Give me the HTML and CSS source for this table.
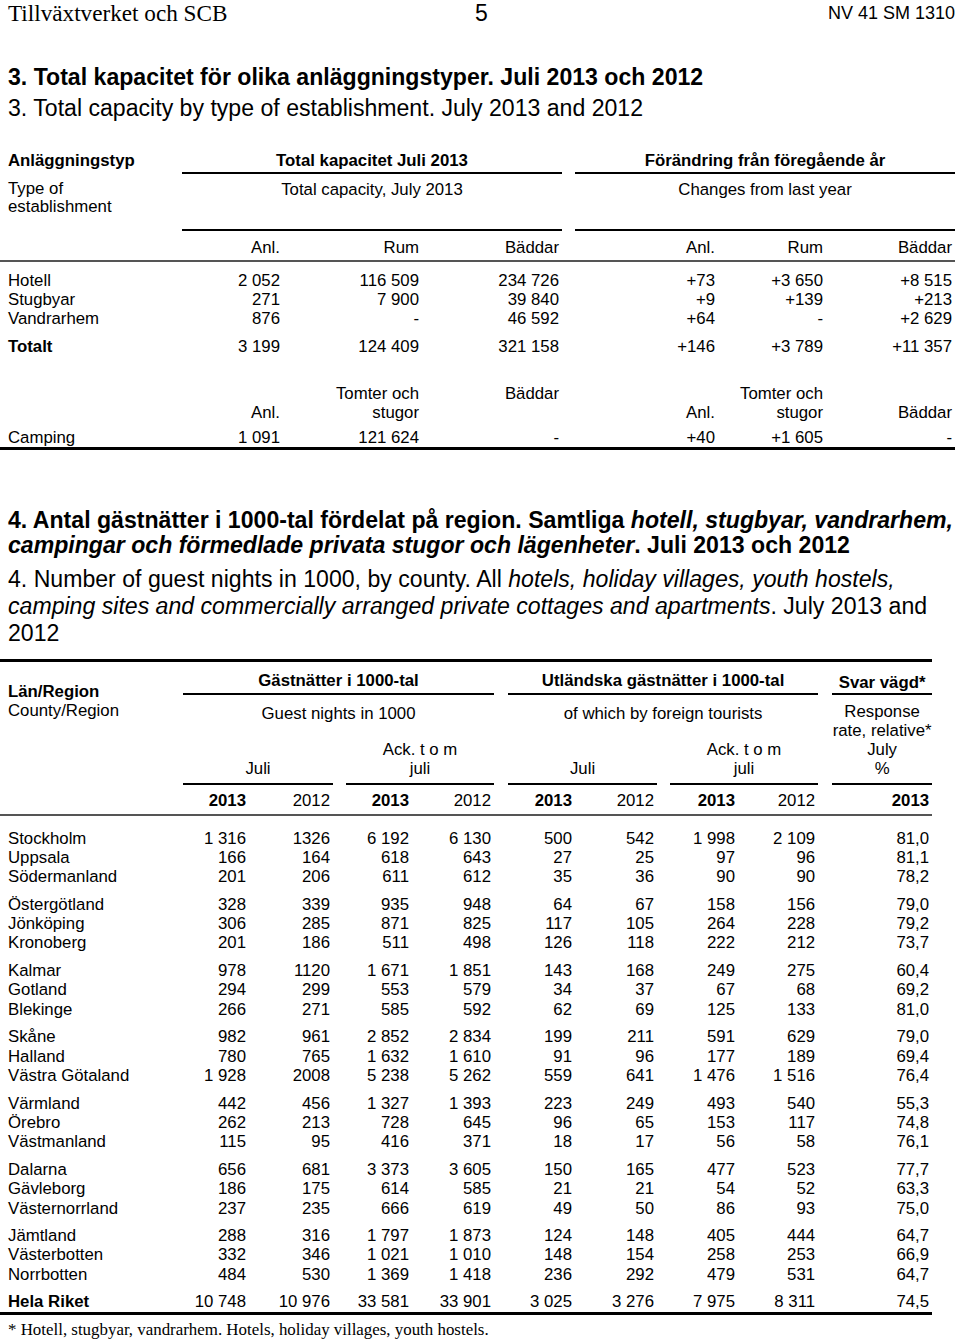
FILE: index.html
```html
<!DOCTYPE html>
<html lang="sv">
<head>
<meta charset="utf-8">
<title>NV 41 SM 1310</title>
<link rel="stylesheet" href="styles.css">
</head>
<body>
<header class="page-head">
  <span class="org">Tillväxtverket och SCB</span>
  <span class="pageno">5</span>
  <span class="docid">NV 41 SM 1310</span>
</header>

<h2 class="t3-sv">3. Total kapacitet för olika anläggningstyper. Juli 2013 och 2012</h2>
<p class="t3-en">3. Total capacity by type of establishment. July 2013 and 2012</p>

<table class="cap">
  <colgroup>
    <col style="width:182px"><col style="width:101px"><col style="width:139px"><col style="width:140px">
    <col style="width:13px"><col style="width:143px"><col style="width:108px"><col style="width:129px">
  </colgroup>
  <tr class="ha">
    <td class="lbl b">Anläggningstyp</td>
    <td class="grp b" colspan="3">Total kapacitet Juli 2013</td>
    <td></td>
    <td class="grp b" colspan="3">Förändring från föregående år</td>
  </tr>
  <tr class="hb">
    <td class="lbl lbl2">Type of<br>establishment</td>
    <td class="grp" colspan="3">Total capacity, July 2013</td>
    <td></td>
    <td class="grp" colspan="3">Changes from last year</td>
  </tr>
  <tr class="hc">
    <td></td><td>Anl.</td><td>Rum</td><td>Bäddar</td><td></td><td>Anl.</td><td>Rum</td><td>Bäddar</td>
  </tr>
  <tr class="sp" style="height:8.5px"><td colspan="8"></td></tr>
  <tr class="row"><td>Hotell</td><td>2 052</td><td>116 509</td><td>234 726</td><td></td><td>+73</td><td>+3 650</td><td>+8 515</td></tr>
  <tr class="row"><td>Stugbyar</td><td>271</td><td>7 900</td><td>39 840</td><td></td><td>+9</td><td>+139</td><td>+213</td></tr>
  <tr class="row"><td>Vandrarhem</td><td>876</td><td>-</td><td>46 592</td><td></td><td>+64</td><td>-</td><td>+2 629</td></tr>
  <tr class="sp" style="height:9px"><td colspan="8"></td></tr>
  <tr class="row"><td class="b">Totalt</td><td>3 199</td><td>124 409</td><td>321 158</td><td></td><td>+146</td><td>+3 789</td><td>+11 357</td></tr>
  <tr class="sp" style="height:28px"><td colspan="8"></td></tr>
  <tr class="row"><td></td><td></td><td>Tomter och</td><td>Bäddar</td><td></td><td></td><td>Tomter och</td><td></td></tr>
  <tr class="row"><td></td><td>Anl.</td><td>stugor</td><td></td><td></td><td>Anl.</td><td>stugor</td><td>Bäddar</td></tr>
  <tr class="sp" style="height:6px"><td colspan="8"></td></tr>
  <tr class="row last"><td>Camping</td><td>1 091</td><td>121 624</td><td>-</td><td></td><td>+40</td><td>+1 605</td><td>-</td></tr>
</table>

<h2 class="t4-sv">4. Antal gästnätter i 1000-tal fördelat på region. Samtliga <i>hotell, stugbyar, vandrarhem,</i><br><i>campingar och förmedlade privata stugor och lägenheter</i>. Juli 2013 och 2012</h2>
<p class="t4-en">4. Number of guest nights in 1000, by county. All <i>hotels, holiday villages, youth hostels,</i><br><i>camping sites and commercially arranged private cottages and apartments</i>. July 2013 and<br>2012</p>

<table class="nights">
  <colgroup>
    <col style="width:183px"><col style="width:66px"><col style="width:84px"><col style="width:13px">
    <col style="width:66px"><col style="width:82px"><col style="width:14px"><col style="width:67px">
    <col style="width:82px"><col style="width:13px"><col style="width:68px"><col style="width:80px">
    <col style="width:14px"><col style="width:100px">
  </colgroup>
  <tr class="ha">
    <td class="lbl" rowspan="2"><b>Län/Region</b><br>County/Region</td>
    <td class="grp b" colspan="5">Gästnätter i 1000-tal</td>
    <td></td>
    <td class="grp b" colspan="5">Utländska gästnätter i 1000-tal</td>
    <td></td>
    <td class="grp b svar">Svar vägd*</td>
  </tr>
  <tr class="hb">
    <td class="sub" colspan="5">Guest nights in 1000</td>
    <td></td>
    <td class="sub" colspan="5">of which by foreign tourists</td>
    <td></td>
    <td class="resp" rowspan="2">Response<br>rate, relative*<br>July<br>%</td>
  </tr>
  <tr class="hc">
    <td></td>
    <td class="per" colspan="2">Juli</td><td></td>
    <td class="per" colspan="2">Ack. t o m<br>juli</td><td></td>
    <td class="per" colspan="2">Juli</td><td></td>
    <td class="per" colspan="2">Ack. t o m<br>juli</td><td></td>
  </tr>
  <tr class="hd">
    <td></td><td class="b">2013</td><td>2012</td><td></td><td class="b">2013</td><td>2012</td><td></td>
    <td class="b">2013</td><td>2012</td><td></td><td class="b">2013</td><td>2012</td><td></td><td class="b">2013</td>
  </tr>
  <tr class="sp" style="height:12.5px"><td colspan="14"></td></tr>
  <tr class="row"><td>Stockholm</td><td>1 316</td><td>1326</td><td></td><td>6 192</td><td>6 130</td><td></td><td>500</td><td>542</td><td></td><td>1 998</td><td>2 109</td><td></td><td>81,0</td></tr>
  <tr class="row"><td>Uppsala</td><td>166</td><td>164</td><td></td><td>618</td><td>643</td><td></td><td>27</td><td>25</td><td></td><td>97</td><td>96</td><td></td><td>81,1</td></tr>
  <tr class="row"><td>Södermanland</td><td>201</td><td>206</td><td></td><td>611</td><td>612</td><td></td><td>35</td><td>36</td><td></td><td>90</td><td>90</td><td></td><td>78,2</td></tr>
  <tr class="sp g"><td colspan="14"></td></tr>
  <tr class="row"><td>Östergötland</td><td>328</td><td>339</td><td></td><td>935</td><td>948</td><td></td><td>64</td><td>67</td><td></td><td>158</td><td>156</td><td></td><td>79,0</td></tr>
  <tr class="row"><td>Jönköping</td><td>306</td><td>285</td><td></td><td>871</td><td>825</td><td></td><td>117</td><td>105</td><td></td><td>264</td><td>228</td><td></td><td>79,2</td></tr>
  <tr class="row"><td>Kronoberg</td><td>201</td><td>186</td><td></td><td>511</td><td>498</td><td></td><td>126</td><td>118</td><td></td><td>222</td><td>212</td><td></td><td>73,7</td></tr>
  <tr class="sp g"><td colspan="14"></td></tr>
  <tr class="row"><td>Kalmar</td><td>978</td><td>1120</td><td></td><td>1 671</td><td>1 851</td><td></td><td>143</td><td>168</td><td></td><td>249</td><td>275</td><td></td><td>60,4</td></tr>
  <tr class="row"><td>Gotland</td><td>294</td><td>299</td><td></td><td>553</td><td>579</td><td></td><td>34</td><td>37</td><td></td><td>67</td><td>68</td><td></td><td>69,2</td></tr>
  <tr class="row"><td>Blekinge</td><td>266</td><td>271</td><td></td><td>585</td><td>592</td><td></td><td>62</td><td>69</td><td></td><td>125</td><td>133</td><td></td><td>81,0</td></tr>
  <tr class="sp g"><td colspan="14"></td></tr>
  <tr class="row"><td>Skåne</td><td>982</td><td>961</td><td></td><td>2 852</td><td>2 834</td><td></td><td>199</td><td>211</td><td></td><td>591</td><td>629</td><td></td><td>79,0</td></tr>
  <tr class="row"><td>Halland</td><td>780</td><td>765</td><td></td><td>1 632</td><td>1 610</td><td></td><td>91</td><td>96</td><td></td><td>177</td><td>189</td><td></td><td>69,4</td></tr>
  <tr class="row"><td>Västra Götaland</td><td>1 928</td><td>2008</td><td></td><td>5 238</td><td>5 262</td><td></td><td>559</td><td>641</td><td></td><td>1 476</td><td>1 516</td><td></td><td>76,4</td></tr>
  <tr class="sp g"><td colspan="14"></td></tr>
  <tr class="row"><td>Värmland</td><td>442</td><td>456</td><td></td><td>1 327</td><td>1 393</td><td></td><td>223</td><td>249</td><td></td><td>493</td><td>540</td><td></td><td>55,3</td></tr>
  <tr class="row"><td>Örebro</td><td>262</td><td>213</td><td></td><td>728</td><td>645</td><td></td><td>96</td><td>65</td><td></td><td>153</td><td>117</td><td></td><td>74,8</td></tr>
  <tr class="row"><td>Västmanland</td><td>115</td><td>95</td><td></td><td>416</td><td>371</td><td></td><td>18</td><td>17</td><td></td><td>56</td><td>58</td><td></td><td>76,1</td></tr>
  <tr class="sp g"><td colspan="14"></td></tr>
  <tr class="row"><td>Dalarna</td><td>656</td><td>681</td><td></td><td>3 373</td><td>3 605</td><td></td><td>150</td><td>165</td><td></td><td>477</td><td>523</td><td></td><td>77,7</td></tr>
  <tr class="row"><td>Gävleborg</td><td>186</td><td>175</td><td></td><td>614</td><td>585</td><td></td><td>21</td><td>21</td><td></td><td>54</td><td>52</td><td></td><td>63,3</td></tr>
  <tr class="row"><td>Västernorrland</td><td>237</td><td>235</td><td></td><td>666</td><td>619</td><td></td><td>49</td><td>50</td><td></td><td>86</td><td>93</td><td></td><td>75,0</td></tr>
  <tr class="sp g"><td colspan="14"></td></tr>
  <tr class="row"><td>Jämtland</td><td>288</td><td>316</td><td></td><td>1 797</td><td>1 873</td><td></td><td>124</td><td>148</td><td></td><td>405</td><td>444</td><td></td><td>64,7</td></tr>
  <tr class="row"><td>Västerbotten</td><td>332</td><td>346</td><td></td><td>1 021</td><td>1 010</td><td></td><td>148</td><td>154</td><td></td><td>258</td><td>253</td><td></td><td>66,9</td></tr>
  <tr class="row"><td>Norrbotten</td><td>484</td><td>530</td><td></td><td>1 369</td><td>1 418</td><td></td><td>236</td><td>292</td><td></td><td>479</td><td>531</td><td></td><td>64,7</td></tr>
  <tr class="sp g"><td colspan="14"></td></tr>
  <tr class="row last"><td class="b">Hela Riket</td><td>10 748</td><td>10 976</td><td></td><td>33 581</td><td>33 901</td><td></td><td>3 025</td><td>3 276</td><td></td><td>7 975</td><td>8 311</td><td></td><td>74,5</td></tr>
</table>

<p class="foot">* Hotell, stugbyar, vandrarhem. Hotels, holiday villages, youth hostels.</p>
</body>
</html>
```

FILE: styles.css
```css
* { box-sizing: border-box; }
html, body { margin: 0; padding: 0; background: #fff; }
body {
  width: 960px;
  font-family: "Liberation Sans", Arial, sans-serif;
  color: #000;
}

.page-head {
  display: grid;
  grid-template-columns: 1fr auto 1fr;
  align-items: center;
  height: 26px;
  padding: 0 5px 0 8px;
}
.org { font-family: "Liberation Serif", "Times New Roman", serif; font-size: 23.2px; line-height: 26px; }
.pageno { font-size: 23px; line-height: 26px; }
.docid { font-size: 18px; line-height: 26px; justify-self: end; }

.t3-sv {
  margin: 39px 0 0 8px;
  font-size: 23.1px;
  line-height: 24px;
  font-weight: bold;
  white-space: nowrap;
}
.t3-en {
  margin: 7px 0 0 8px;
  font-size: 23.1px;
  line-height: 24px;
  white-space: nowrap;
}

table {
  border-collapse: separate;
  border-spacing: 0;
  table-layout: fixed;
  font-size: 16.8px;
  line-height: 19px;
}
td {
  padding: 0 3px 0 0;
  vertical-align: top;
  text-align: right;
  white-space: nowrap;
}
td:first-child { text-align: left; padding-left: 8px; }
.b { font-weight: bold; }

/* Table 3 */
.cap { width: 955px; margin-top: 28px; }
.cap .ha td { padding-top: 2.5px; padding-bottom: 2.5px; }
.cap .grp { text-align: center; padding-right: 0; border-bottom: 2px solid #000; }
.cap .hb td { padding-top: 6px; }
.cap .hb .grp { padding-bottom: 30px; }
.cap .lbl2 { padding-top: 5px; line-height: 18px; }
.cap .hc td { padding-top: 6.5px; padding-bottom: 3.5px; border-bottom: 2px solid #555; }
.cap .row td { line-height: 19px; }
.sp td { padding: 0; font-size: 0; line-height: 0; height: inherit; }
.row.last td { border-bottom: 3px solid #000; }

/* Section 4 */
.t4-sv {
  margin: 58px 0 0 8px;
  font-size: 23.1px;
  line-height: 25px;
  font-weight: bold;
  white-space: nowrap;
}
.t4-en {
  margin: 8px 0 0 8px;
  font-size: 23.1px;
  line-height: 27px;
  white-space: nowrap;
}

/* Table 4 */
.nights { width: 932px; margin-top: 12.5px; border-top: 3px solid #000; }
.nights .lbl { padding-top: 19.5px; line-height: 19.5px; }
.nights .grp { text-align: center; padding: 8.5px 0 1.5px; border-bottom: 2px solid #000; }
.nights .svar { padding-top: 10.5px; }
.nights .sub { text-align: center; padding: 8.5px 0 17px; }
.nights .resp { text-align: center; padding: 6.5px 0 5.5px; border-bottom: 2px solid #000; }
.nights .per { text-align: center; padding: 0 0 5.5px; vertical-align: bottom; border-bottom: 2px solid #000; }
.nights .hd td { padding-top: 5.5px; padding-bottom: 4.5px; border-bottom: 2px solid #555; }
.nights .row td { line-height: 19.3px; }
.nights .sp.g { height: 8.4px; }

.foot {
  margin: 6px 0 0 8px;
  font-family: "Liberation Serif", "Times New Roman", serif;
  font-size: 16.9px;
  line-height: 18px;
  white-space: nowrap;
}
```
